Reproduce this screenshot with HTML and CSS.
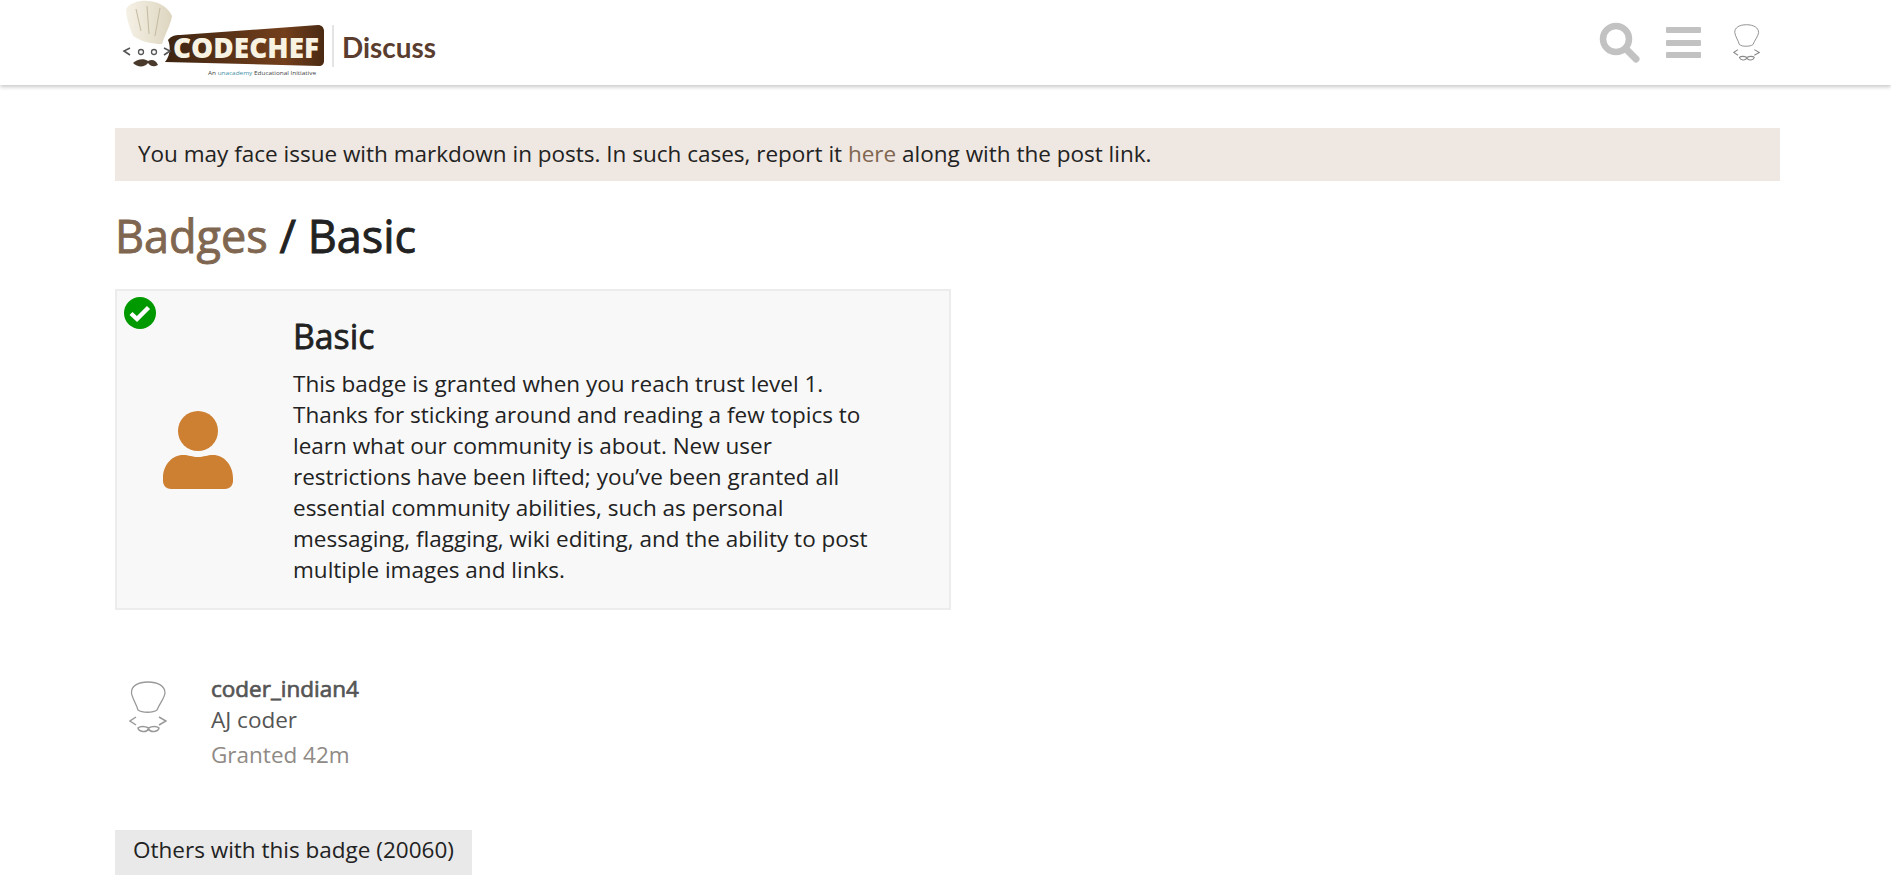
FILE: index.html
```html
<!DOCTYPE html>
<html lang="en">
<head>
<meta charset="utf-8">
<title>Badges / Basic</title>
<link rel="stylesheet" href="styles.css">
</head>
<body>
<svg class="defs" width="0" height="0" aria-hidden="true">
  <symbol id="chef" viewBox="0 0 38 52">
    <path d="M9 29C7 22 3 17 2.5 12C2 5 9 1 19 1C29 1 36 5 36 12C35.5 17 31 22 28 29C24 32 13 32 9 29Z" fill="none" stroke="currentColor" stroke-width="1.3"/>
    <path d="M7 36L1 40L7 44M30 36L37 40L30 44" fill="none" stroke="currentColor" stroke-width="1.5"/>
    <path d="M19.5 47C16 45 11 45 9 47C10 51 17 52 19.5 48C22 52 29 51 30 47C28 45 23 45 19.5 47Z" fill="none" stroke="currentColor" stroke-width="1.5"/>
  </symbol>
</svg>
<header class="site-header">
  <div class="header-inner">
    <a class="logo" href="#">
      <svg class="logo-img" width="360" height="85" viewBox="0 0 360 85">
        <defs>
          <linearGradient id="brown" x1="0" x2="1" y1="0" y2="0">
            <stop offset="0" stop-color="#3d2411"/>
            <stop offset="0.75" stop-color="#733f1c"/>
            <stop offset="1" stop-color="#4a2a13"/>
          </linearGradient>
          <linearGradient id="hat" x1="0" x2="1" y1="0" y2="0">
            <stop offset="0" stop-color="#f5f1e6"/>
            <stop offset="1" stop-color="#ddd5bf"/>
          </linearGradient>
        </defs>
        <path d="M33 36C29 26 26 16 26 9C30 2 42 0 48 1C56 1 68 6 72 16C71 24 66 32 62 44C52 44 42 42 33 36Z" fill="url(#hat)"/>
        <path d="M36 9L41 31M47 6L49 34M60 8L55 36" stroke="#c4baa0" stroke-width="1" fill="none"/>
        <path d="M68 40C71 36 75 35 80 35L218 25C221 25 224 27 224 31L224 61C224 64 222 66 219 66L65 62C70 56 71 47 68 40Z" fill="url(#brown)"/>
        <text class="logo-word" x="73" y="58" textLength="146" lengthAdjust="spacingAndGlyphs">CODECHEF</text>
        <circle cx="41" cy="52" r="2.5" fill="none" stroke="#555" stroke-width="1.3"/>
        <circle cx="54" cy="52" r="2.5" fill="none" stroke="#555" stroke-width="1.3"/>
        <path d="M30 48L24 51L30 55M64 48L70 51L64 55" stroke="#555" stroke-width="1.6" fill="none"/>
        <path d="M48 61C44 58 37 59 33 63C38 68 45 67 48 63C51 67 54 67 58 65C56 60 52 59 48 61Z" fill="#4a3a2c"/>
        <text class="logo-sub" x="108" y="75" textLength="108" lengthAdjust="spacingAndGlyphs">An <tspan class="logo-sub-accent">unacademy</tspan> Educational Initiative</text>
        <path d="M233 25V67" stroke="#c9c9c9" stroke-width="1"/>
        <text class="logo-discuss" x="242" y="58" textLength="94" lengthAdjust="spacingAndGlyphs">Discuss</text>
      </svg>
    </a>
    <nav class="header-icons">
      <svg class="icon-search" width="41" height="41" viewBox="0 0 41 41" aria-label="search">
        <circle cx="17" cy="17" r="13" fill="none" stroke="#c2c2c2" stroke-width="6.5"/>
        <path d="M27 27L37 37" stroke="#c2c2c2" stroke-width="7" stroke-linecap="round"/>
      </svg>
      <div class="icon-menu" aria-label="menu"><span></span><span></span><span></span></div>
      <svg class="icon-avatar" width="27" height="37"><use href="#chef"/></svg>
    </nav>
  </div>
</header>
<main class="wrap">
  <div class="notice">You may face issue with markdown in posts. In such cases, report it <a href="#">here</a> along with the post link.</div>
  <h1 class="page-title"><a href="#">Badges</a> / Basic</h1>
  <section class="badge-card">
    <svg class="badge-check" width="32" height="32" viewBox="0 0 32 32">
      <circle cx="16" cy="16" r="16" fill="#009900"/>
      <path d="M7 16.5L13 22L24.5 10.5" fill="none" stroke="#fff" stroke-width="4.4"/>
    </svg>
    <div class="badge-icon">
      <svg width="70" height="78" viewBox="0 0 70 78">
        <circle cx="35" cy="20" r="20" fill="#cd7f32"/>
        <path d="M0 67C0 54 9 44 20 44C26 44 29 46 35 46C41 46 44 44 50 44C61 44 70 54 70 67V70C70 75 66 78 62 78H8C4 78 0 75 0 70Z" fill="#cd7f32"/>
      </svg>
    </div>
    <div class="badge-info">
      <h3 class="badge-name">Basic</h3>
      <p class="badge-desc">This badge is granted when you reach trust level 1. Thanks for sticking around and reading a few topics to learn what our community is about. New user restrictions have been lifted; you’ve been granted all essential community abilities, such as personal messaging, flagging, wiki editing, and the ability to post multiple images and links.</p>
    </div>
  </section>
  <section class="grant">
    <svg class="grant-avatar" width="38" height="52"><use href="#chef"/></svg>
    <div class="grant-info">
      <div class="grant-user">coder_indian4</div>
      <div class="grant-title">AJ coder</div>
      <div class="grant-time">Granted 42m</div>
    </div>
  </section>
  <div class="others">Others with this badge (20060)</div>
</main>
</body>
</html>
```
FILE: styles.css
```css
html, body {
  margin: 0;
  height: 889px;
  overflow: hidden;
  background: #fff;
}
body {
  font-family: "Open Sans", sans-serif;
  font-size: 22.5px;
  line-height: 31px;
  color: #222;
}
.defs { position: absolute; }
a { color: #7f6650; text-decoration: none; }

.site-header {
  height: 85px;
  box-shadow: 0 2px 4px rgba(0,0,0,.22);
}
.header-inner {
  padding: 0 111px 0 100px;
  height: 85px;
  display: flex;
  justify-content: space-between;
}
.logo { display: block; height: 85px; }
.logo-img { display: block; overflow: visible; }
.logo-word { font: 800 28px "Open Sans", sans-serif; fill: #f8f2e2; }
.logo-sub { font: 400 6px "Open Sans", sans-serif; fill: #444; }
.logo-sub-accent { fill: #3f8fa8; }
.logo-discuss { font: 700 29px "Lato", sans-serif; fill: #5a3d2e; }

.header-icons {
  display: flex;
  align-items: center;
  gap: 26px;
  padding-right: 20px;
  height: 85px;
}
.icon-menu {
  width: 35px;
  display: flex;
  flex-direction: column;
  gap: 6.5px;
}
.icon-menu span {
  height: 6px;
  border-radius: 1px;
  background: #c2c2c2;
}
.icon-avatar { color: #8a8a8a; margin-left: 6px; }

.wrap { margin: 43px 111px 0 115px; }
.notice {
  height: 53px;
  line-height: 51px;
  padding: 0 23px;
  background: #efe7e1;
}
.page-title {
  margin: 27px 0 25px;
  font-size: 45px;
  line-height: 56px;
  font-weight: 400;
  -webkit-text-stroke: .9px currentColor;
  color: #222;
}
.page-title a { color: #7f6650; }

.badge-card {
  position: relative;
  box-sizing: border-box;
  width: 836px;
  height: 321px;
  display: flex;
  background: #f8f8f8;
  border: 2px solid #ececec;
}
.badge-check { position: absolute; left: 7px; top: 6px; }
.badge-icon {
  width: 176px;
  flex: none;
  padding: 120px 0 0 46px;
  box-sizing: border-box;
}
.badge-info { width: 600px; padding-top: 24px; }
.badge-name {
  margin: 0 0 11px;
  font-size: 33.75px;
  line-height: 42px;
  font-weight: 400;
  -webkit-text-stroke: .8px currentColor;
}
.badge-desc { margin: 0; }

.grant {
  display: flex;
  gap: 44px;
  margin: 63px 0 0 14px;
  color: #555;
}
.grant-avatar { color: #999; flex: none; margin-top: 8px; }
.grant-user { font-weight: 400; -webkit-text-stroke: .7px currentColor; line-height: 31px; }
.grant-title { line-height: 31px; }
.grant-time { color: #8f8a85; line-height: 39px; }

.others {
  width: fit-content;
  margin-top: 56px;
  padding: 4px 18px 10px;
  background: #e9e9e9;
  color: #222;
}
```
